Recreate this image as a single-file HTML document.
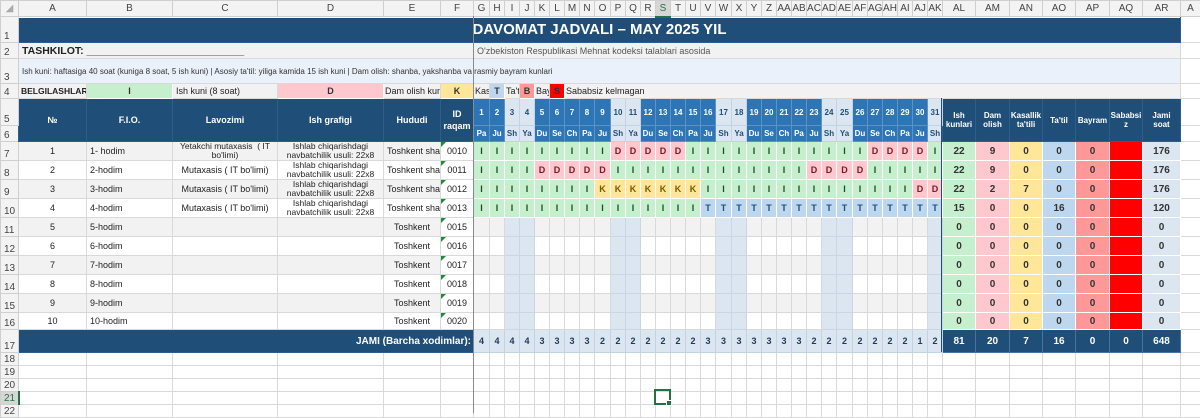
<!DOCTYPE html>
<html><head><meta charset="utf-8"><style>
body{margin:0;width:1200px;height:413px;overflow:hidden;background:#fff;position:relative}
table{border-collapse:collapse;table-layout:fixed;position:absolute;left:0;top:0;width:1200px}
td{border:1px solid #d9d9d9;padding:0;overflow:hidden;white-space:nowrap;font:9px "Liberation Sans",Arial,sans-serif;text-align:center;color:#222;vertical-align:middle}
td.ch{background:#f3f3f3;color:#444;font-size:10px;border-color:#cfcfcf}
td.rh{background:#f3f3f3;color:#444;font-size:10px;text-align:left;padding-left:3px;vertical-align:bottom;border-color:#cfcfcf}
.hd{background:#1f4e79;color:#fff;font-weight:bold;border-color:#2c5d8c}
.dh{background:#2e75b6;color:#fff;font-weight:bold;font-size:8px;border-color:#5b93c7}
.dw{background:#dce6f1;color:#1f4e79;font-weight:bold;font-size:8px;border-color:#c3d3e6}
.l{text-align:left;padding-left:3px}
.s{font-size:8.5px;line-height:9px;white-space:normal}
.id{position:relative}
.id:before{content:"";position:absolute;left:0;top:0;border-top:5px solid #1e8a3a;border-right:5px solid transparent}
.o{background:#f2f2f2}
.g,.p,.y,.t{font-weight:bold;font-size:9px;border-color:#fff}
.g{background:#c6efce;color:#1d4d2a}.p{background:#ffc7ce;color:#7a1a25}.y{background:#ffe699;color:#7a5a00}.t{background:#bdd7ee;color:#1f4e79}
.w{background:#dce6f1;border-color:#c9d6e6}
.a1{background:#c6efce}.a2{background:#ffc7ce}.a3{background:#ffe699}.a4{background:#bdd7ee}.a5{background:#ff9999}.a6{background:#ff0000}.a7{background:#dce6f1}
.a1,.a2,.a3,.a4,.a5,.a6,.a7{font-weight:bold;font-size:10px;color:#333;border-color:#fff}
.tot{background:#dce6f1;font-weight:bold;font-size:9px;color:#1f3a5a;border-color:#c3d3e6}
.td{background:#1f4e79;color:#fff;font-weight:bold;font-size:10px;border-color:#4a72a0}
.b{font-weight:bold}
</style></head><body>
<table>
<colgroup><col style="width:18px"><col style="width:68px"><col style="width:86px"><col style="width:105px"><col style="width:106px"><col style="width:57px"><col style="width:33px">
<col style="width:16px"><col style="width:15px"><col style="width:15px"><col style="width:15px"><col style="width:15px"><col style="width:15px"><col style="width:15px"><col style="width:15px">
<col style="width:16px"><col style="width:15px"><col style="width:15px"><col style="width:15px"><col style="width:15px"><col style="width:15px"><col style="width:15px"><col style="width:15px">
<col style="width:16px"><col style="width:15px"><col style="width:15px"><col style="width:15px"><col style="width:15px"><col style="width:15px"><col style="width:15px"><col style="width:15px">
<col style="width:16px"><col style="width:15px"><col style="width:15px"><col style="width:15px"><col style="width:15px"><col style="width:15px"><col style="width:15px">
<col style="width:33px"><col style="width:34px"><col style="width:33px"><col style="width:33px"><col style="width:34px"><col style="width:33px"><col style="width:38px"><col style="width:20px"></colgroup>
<tr style="height:16px"><td class="ch" style="color:#aaa">◢</td><td class="ch">A</td><td class="ch">B</td><td class="ch">C</td><td class="ch">D</td><td class="ch">E</td><td class="ch">F</td><td class="ch">G</td><td class="ch">H</td><td class="ch">I</td><td class="ch">J</td><td class="ch">K</td><td class="ch">L</td><td class="ch">M</td><td class="ch">N</td><td class="ch">O</td><td class="ch">P</td><td class="ch">Q</td><td class="ch">R</td><td class="ch" style="background:#d6d6d6;color:#217346;border-bottom:2px solid #217346">S</td><td class="ch">T</td><td class="ch">U</td><td class="ch">V</td><td class="ch">W</td><td class="ch">X</td><td class="ch">Y</td><td class="ch">Z</td><td class="ch">AA</td><td class="ch">AB</td><td class="ch">AC</td><td class="ch">AD</td><td class="ch">AE</td><td class="ch">AF</td><td class="ch">AG</td><td class="ch">AH</td><td class="ch">AI</td><td class="ch">AJ</td><td class="ch">AK</td><td class="ch">AL</td><td class="ch">AM</td><td class="ch">AN</td><td class="ch">AO</td><td class="ch">AP</td><td class="ch">AQ</td><td class="ch">AR</td><td class="ch">A</td></tr>
<tr style="height:26px"><td class="rh">1</td><td colspan="44" class="hd" style="font-size:15px">DAVOMAT JADVALI – MAY 2025 YIL</td><td></td></tr>
<tr style="height:16px;background:#f2f2f2"><td class="rh">2</td><td colspan="6" class="l b" style="font-size:10.5px">TASHKILOT: ___________________________</td><td colspan="38" class="l" style="color:#555;font-size:9px">O'zbekiston Respublikasi Mehnat kodeksi talablari asosida</td><td style="background:#fff"></td></tr>
<tr style="height:25px"><td class="rh">3</td><td colspan="44" class="l" style="background:#eaf1fb;font-size:8px;color:#333">Ish kuni: haftasiga 40 soat (kuniga 8 soat, 5 ish kuni) | Asosiy ta'til: yiliga kamida 15 ish kuni | Dam olish: shanba, yakshanba va rasmiy bayram kunlari</td><td></td></tr>
<tr style="height:15px;background:#f2f2f2"><td class="rh">4</td><td class="l b" style="font-size:8.5px;padding-left:2px">BELGILASHLAR:</td><td class="a1" style="font-size:9px">I</td><td class="l">Ish kuni (8 soat)</td><td class="a2" style="font-size:9px">D</td><td class="l" style="padding-left:1px">Dam olish kuni</td><td class="a3" style="font-size:9px">K</td><td class="l" style="padding-left:1px">Kas</td><td class="a4" style="font-size:9px">T</td><td class="l" style="padding-left:1px">Ta't</td><td class="a5" style="font-size:9px">B</td><td class="l" style="padding-left:1px">Bay</td><td class="a6" style="font-size:9px">S</td><td colspan="32" class="l" style="padding-left:1px">Sababsiz kelmagan</td><td style="background:#fff"></td></tr>
<tr style="height:27px"><td class="rh">5</td><td rowspan="2" class="hd">№</td><td rowspan="2" class="hd">F.I.O.</td><td rowspan="2" class="hd">Lavozimi</td><td rowspan="2" class="hd">Ish grafigi</td><td rowspan="2" class="hd">Hududi</td><td rowspan="2" class="hd" style="line-height:12px">ID<br>raqam</td>
<td class="dh">1</td><td class="dh">2</td><td class="dw">3</td><td class="dw">4</td><td class="dh">5</td><td class="dh">6</td><td class="dh">7</td><td class="dh">8</td><td class="dh">9</td><td class="dw">10</td><td class="dw">11</td><td class="dh">12</td><td class="dh">13</td><td class="dh">14</td><td class="dh">15</td><td class="dh">16</td><td class="dw">17</td><td class="dw">18</td><td class="dh">19</td><td class="dh">20</td><td class="dh">21</td><td class="dh">22</td><td class="dh">23</td><td class="dw">24</td><td class="dw">25</td><td class="dh">26</td><td class="dh">27</td><td class="dh">28</td><td class="dh">29</td><td class="dh">30</td><td class="dw">31</td>
<td rowspan="2" class="hd s" style="font-size:8px">Ish<br>kunlari</td><td rowspan="2" class="hd s" style="font-size:8px">Dam<br>olish</td><td rowspan="2" class="hd s" style="font-size:8px">Kasallik<br>ta'tili</td><td rowspan="2" class="hd" style="font-size:8px">Ta'til</td><td rowspan="2" class="hd" style="font-size:8px">Bayram</td><td rowspan="2" class="hd s" style="font-size:8px">Sababsi<br>z</td><td rowspan="2" class="hd s" style="font-size:8px">Jami<br>soat</td><td></td></tr>
<tr style="height:16px"><td class="rh">6</td><td class="dh">Pa</td><td class="dh">Ju</td><td class="dw">Sh</td><td class="dw">Ya</td><td class="dh">Du</td><td class="dh">Se</td><td class="dh">Ch</td><td class="dh">Pa</td><td class="dh">Ju</td><td class="dw">Sh</td><td class="dw">Ya</td><td class="dh">Du</td><td class="dh">Se</td><td class="dh">Ch</td><td class="dh">Pa</td><td class="dh">Ju</td><td class="dw">Sh</td><td class="dw">Ya</td><td class="dh">Du</td><td class="dh">Se</td><td class="dh">Ch</td><td class="dh">Pa</td><td class="dh">Ju</td><td class="dw">Sh</td><td class="dw">Ya</td><td class="dh">Du</td><td class="dh">Se</td><td class="dh">Ch</td><td class="dh">Pa</td><td class="dh">Ju</td><td class="dw">Sh</td><td></td></tr>
<tr style="height:19px" class="o"><td class="rh">7</td><td>1</td><td class="l">1- hodim</td><td class="s">Yetakchi mutaxasis &nbsp;( IT<br>bo'limi)</td><td class="s">Ishlab chiqarishdagi<br>navbatchilik usuli: 22x8</td><td class="l">Toshkent shari</td><td class="id" style="background:#fff">0010</td>
<td class="g">I</td><td class="g">I</td><td class="g">I</td><td class="g">I</td><td class="g">I</td><td class="g">I</td><td class="g">I</td><td class="g">I</td><td class="g">I</td><td class="p">D</td><td class="p">D</td><td class="p">D</td><td class="p">D</td><td class="p">D</td><td class="g">I</td><td class="g">I</td><td class="g">I</td><td class="g">I</td><td class="g">I</td><td class="g">I</td><td class="g">I</td><td class="g">I</td><td class="g">I</td><td class="g">I</td><td class="g">I</td><td class="g">I</td><td class="p">D</td><td class="p">D</td><td class="p">D</td><td class="p">D</td><td class="g">I</td>
<td class="a1">22</td><td class="a2">9</td><td class="a3">0</td><td class="a4">0</td><td class="a5">0</td><td class="a6"></td><td class="a7">176</td><td style="background:#fff"></td></tr>
<tr style="height:19px"><td class="rh">8</td><td>2</td><td class="l">2-hodim</td><td>Mutaxasis ( IT bo'limi)</td><td class="s">Ishlab chiqarishdagi<br>navbatchilik usuli: 22x8</td><td class="l">Toshkent shari</td><td class="id">0011</td>
<td class="g">I</td><td class="g">I</td><td class="g">I</td><td class="g">I</td><td class="p">D</td><td class="p">D</td><td class="p">D</td><td class="p">D</td><td class="p">D</td><td class="g">I</td><td class="g">I</td><td class="g">I</td><td class="g">I</td><td class="g">I</td><td class="g">I</td><td class="g">I</td><td class="g">I</td><td class="g">I</td><td class="g">I</td><td class="g">I</td><td class="g">I</td><td class="g">I</td><td class="p">D</td><td class="p">D</td><td class="p">D</td><td class="p">D</td><td class="g">I</td><td class="g">I</td><td class="g">I</td><td class="g">I</td><td class="g">I</td>
<td class="a1">22</td><td class="a2">9</td><td class="a3">0</td><td class="a4">0</td><td class="a5">0</td><td class="a6"></td><td class="a7">176</td><td></td></tr>
<tr style="height:19px" class="o"><td class="rh">9</td><td>3</td><td class="l">3-hodim</td><td>Mutaxasis ( IT bo'limi)</td><td class="s">Ishlab chiqarishdagi<br>navbatchilik usuli: 22x8</td><td class="l">Toshkent shari</td><td class="id" style="background:#fff">0012</td>
<td class="g">I</td><td class="g">I</td><td class="g">I</td><td class="g">I</td><td class="g">I</td><td class="g">I</td><td class="g">I</td><td class="g">I</td><td class="y">K</td><td class="y">K</td><td class="y">K</td><td class="y">K</td><td class="y">K</td><td class="y">K</td><td class="y">K</td><td class="g">I</td><td class="g">I</td><td class="g">I</td><td class="g">I</td><td class="g">I</td><td class="g">I</td><td class="g">I</td><td class="g">I</td><td class="g">I</td><td class="g">I</td><td class="g">I</td><td class="g">I</td><td class="g">I</td><td class="g">I</td><td class="p">D</td><td class="p">D</td>
<td class="a1">22</td><td class="a2">2</td><td class="a3">7</td><td class="a4">0</td><td class="a5">0</td><td class="a6"></td><td class="a7">176</td><td style="background:#fff"></td></tr>
<tr style="height:19px"><td class="rh">10</td><td>4</td><td class="l">4-hodim</td><td>Mutaxasis ( IT bo'limi)</td><td class="s">Ishlab chiqarishdagi<br>navbatchilik usuli: 22x8</td><td class="l">Toshkent shari</td><td class="id">0013</td>
<td class="g">I</td><td class="g">I</td><td class="g">I</td><td class="g">I</td><td class="g">I</td><td class="g">I</td><td class="g">I</td><td class="g">I</td><td class="g">I</td><td class="g">I</td><td class="g">I</td><td class="g">I</td><td class="g">I</td><td class="g">I</td><td class="g">I</td><td class="t">T</td><td class="t">T</td><td class="t">T</td><td class="t">T</td><td class="t">T</td><td class="t">T</td><td class="t">T</td><td class="t">T</td><td class="t">T</td><td class="t">T</td><td class="t">T</td><td class="t">T</td><td class="t">T</td><td class="t">T</td><td class="t">T</td><td class="t">T</td>
<td class="a1">15</td><td class="a2">0</td><td class="a3">0</td><td class="a4">16</td><td class="a5">0</td><td class="a6"></td><td class="a7">120</td><td></td></tr>
<tr style="height:19px" class="o"><td class="rh">11</td><td>5</td><td class="l">5-hodim</td><td></td><td></td><td>Toshkent</td><td class="id" style="background:#fff">0015</td><td></td><td></td><td class="w"></td><td class="w"></td><td></td><td></td><td></td><td></td><td></td><td class="w"></td><td class="w"></td><td></td><td></td><td></td><td></td><td></td><td class="w"></td><td class="w"></td><td></td><td></td><td></td><td></td><td></td><td class="w"></td><td class="w"></td><td></td><td></td><td></td><td></td><td></td><td class="w"></td><td class="a1">0</td><td class="a2">0</td><td class="a3">0</td><td class="a4">0</td><td class="a5">0</td><td class="a6"></td><td class="a7">0</td><td style="background:#fff"></td></tr>
<tr style="height:19px"><td class="rh">12</td><td>6</td><td class="l">6-hodim</td><td></td><td></td><td>Toshkent</td><td class="id">0016</td><td></td><td></td><td class="w"></td><td class="w"></td><td></td><td></td><td></td><td></td><td></td><td class="w"></td><td class="w"></td><td></td><td></td><td></td><td></td><td></td><td class="w"></td><td class="w"></td><td></td><td></td><td></td><td></td><td></td><td class="w"></td><td class="w"></td><td></td><td></td><td></td><td></td><td></td><td class="w"></td><td class="a1">0</td><td class="a2">0</td><td class="a3">0</td><td class="a4">0</td><td class="a5">0</td><td class="a6"></td><td class="a7">0</td><td></td></tr>
<tr style="height:19px" class="o"><td class="rh">13</td><td>7</td><td class="l">7-hodim</td><td></td><td></td><td>Toshkent</td><td class="id" style="background:#fff">0017</td><td></td><td></td><td class="w"></td><td class="w"></td><td></td><td></td><td></td><td></td><td></td><td class="w"></td><td class="w"></td><td></td><td></td><td></td><td></td><td></td><td class="w"></td><td class="w"></td><td></td><td></td><td></td><td></td><td></td><td class="w"></td><td class="w"></td><td></td><td></td><td></td><td></td><td></td><td class="w"></td><td class="a1">0</td><td class="a2">0</td><td class="a3">0</td><td class="a4">0</td><td class="a5">0</td><td class="a6"></td><td class="a7">0</td><td style="background:#fff"></td></tr>
<tr style="height:19px"><td class="rh">14</td><td>8</td><td class="l">8-hodim</td><td></td><td></td><td>Toshkent</td><td class="id">0018</td><td></td><td></td><td class="w"></td><td class="w"></td><td></td><td></td><td></td><td></td><td></td><td class="w"></td><td class="w"></td><td></td><td></td><td></td><td></td><td></td><td class="w"></td><td class="w"></td><td></td><td></td><td></td><td></td><td></td><td class="w"></td><td class="w"></td><td></td><td></td><td></td><td></td><td></td><td class="w"></td><td class="a1">0</td><td class="a2">0</td><td class="a3">0</td><td class="a4">0</td><td class="a5">0</td><td class="a6"></td><td class="a7">0</td><td></td></tr>
<tr style="height:19px" class="o"><td class="rh">15</td><td>9</td><td class="l">9-hodim</td><td></td><td></td><td>Toshkent</td><td class="id" style="background:#fff">0019</td><td></td><td></td><td class="w"></td><td class="w"></td><td></td><td></td><td></td><td></td><td></td><td class="w"></td><td class="w"></td><td></td><td></td><td></td><td></td><td></td><td class="w"></td><td class="w"></td><td></td><td></td><td></td><td></td><td></td><td class="w"></td><td class="w"></td><td></td><td></td><td></td><td></td><td></td><td class="w"></td><td class="a1">0</td><td class="a2">0</td><td class="a3">0</td><td class="a4">0</td><td class="a5">0</td><td class="a6"></td><td class="a7">0</td><td style="background:#fff"></td></tr>
<tr style="height:17px"><td class="rh">16</td><td>10</td><td class="l">10-hodim</td><td></td><td></td><td>Toshkent</td><td class="id">0020</td><td></td><td></td><td class="w"></td><td class="w"></td><td></td><td></td><td></td><td></td><td></td><td class="w"></td><td class="w"></td><td></td><td></td><td></td><td></td><td></td><td class="w"></td><td class="w"></td><td></td><td></td><td></td><td></td><td></td><td class="w"></td><td class="w"></td><td></td><td></td><td></td><td></td><td></td><td class="w"></td><td class="a1">0</td><td class="a2">0</td><td class="a3">0</td><td class="a4">0</td><td class="a5">0</td><td class="a6"></td><td class="a7">0</td><td></td></tr>
<tr style="height:23px"><td class="rh">17</td><td colspan="6" class="hd" style="text-align:right;padding-right:2px;font-size:10px">JAMI (Barcha xodimlar):</td>
<td class="tot">4</td><td class="tot">4</td><td class="tot">4</td><td class="tot">4</td><td class="tot">3</td><td class="tot">3</td><td class="tot">3</td><td class="tot">3</td><td class="tot">2</td><td class="tot">2</td><td class="tot">2</td><td class="tot">2</td><td class="tot">2</td><td class="tot">2</td><td class="tot">2</td><td class="tot">3</td><td class="tot">3</td><td class="tot">3</td><td class="tot">3</td><td class="tot">3</td><td class="tot">3</td><td class="tot">3</td><td class="tot">2</td><td class="tot">2</td><td class="tot">2</td><td class="tot">2</td><td class="tot">2</td><td class="tot">2</td><td class="tot">2</td><td class="tot">1</td><td class="tot">2</td>
<td class="td">81</td><td class="td">20</td><td class="td">7</td><td class="td">16</td><td class="td">0</td><td class="td">0</td><td class="td">648</td><td></td></tr>
<tr style="height:13px"><td class="rh">18</td><td></td><td></td><td></td><td></td><td></td><td></td><td></td><td></td><td></td><td></td><td></td><td></td><td></td><td></td><td></td><td></td><td></td><td></td><td></td><td></td><td></td><td></td><td></td><td></td><td></td><td></td><td></td><td></td><td></td><td></td><td></td><td></td><td></td><td></td><td></td><td></td><td></td><td></td><td></td><td></td><td></td><td></td><td></td><td></td><td></td></tr>
<tr style="height:13px"><td class="rh">19</td><td></td><td></td><td></td><td></td><td></td><td></td><td></td><td></td><td></td><td></td><td></td><td></td><td></td><td></td><td></td><td></td><td></td><td></td><td></td><td></td><td></td><td></td><td></td><td></td><td></td><td></td><td></td><td></td><td></td><td></td><td></td><td></td><td></td><td></td><td></td><td></td><td></td><td></td><td></td><td></td><td></td><td></td><td></td><td></td><td></td></tr>
<tr style="height:13px"><td class="rh">20</td><td></td><td></td><td></td><td></td><td></td><td></td><td></td><td></td><td></td><td></td><td></td><td></td><td></td><td></td><td></td><td></td><td></td><td></td><td></td><td></td><td></td><td></td><td></td><td></td><td></td><td></td><td></td><td></td><td></td><td></td><td></td><td></td><td></td><td></td><td></td><td></td><td></td><td></td><td></td><td></td><td></td><td></td><td></td><td></td><td></td></tr>
<tr style="height:13px"><td class="rh" style="background:#d6d6d6;color:#217346;border-right:2px solid #217346">21</td><td></td><td></td><td></td><td></td><td></td><td></td><td></td><td></td><td></td><td></td><td></td><td></td><td></td><td></td><td></td><td></td><td></td><td></td><td></td><td></td><td></td><td></td><td></td><td></td><td></td><td></td><td></td><td></td><td></td><td></td><td></td><td></td><td></td><td></td><td></td><td></td><td></td><td></td><td></td><td></td><td></td><td></td><td></td><td></td><td></td></tr>
<tr style="height:13px"><td class="rh">22</td><td></td><td></td><td></td><td></td><td></td><td></td><td></td><td></td><td></td><td></td><td></td><td></td><td></td><td></td><td></td><td></td><td></td><td></td><td></td><td></td><td></td><td></td><td></td><td></td><td></td><td></td><td></td><td></td><td></td><td></td><td></td><td></td><td></td><td></td><td></td><td></td><td></td><td></td><td></td><td></td><td></td><td></td><td></td><td></td><td></td></tr>
</table>
<div style="position:absolute;left:473px;top:16px;width:1px;height:397px;background:#8a8a8a"></div>
<div style="position:absolute;left:941px;top:98px;width:1px;height:254px;background:#1f4e79"></div>
<div style="position:absolute;left:654px;top:389px;width:13px;height:12px;border:2px solid #217346"></div>
<div style="position:absolute;left:666px;top:400px;width:4px;height:4px;background:#217346;border:1px solid #fff"></div>
</body></html>
